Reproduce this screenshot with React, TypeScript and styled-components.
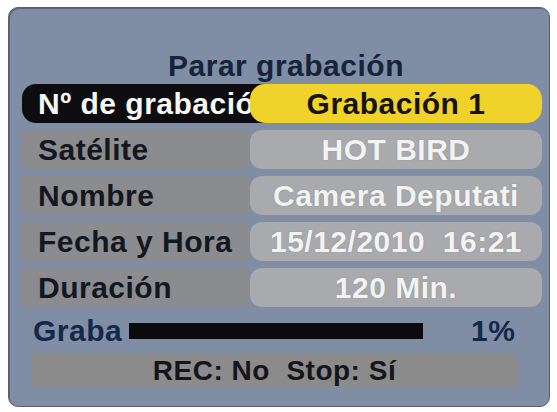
import React from "react"
import styled, { createGlobalStyle } from "styled-components"

const GlobalStyle = createGlobalStyle`
    html, body {
        margin: 0;
        padding: 0;
        background: #ffffff;
    }
    body {
        font-family: "Liberation Sans", Arial, sans-serif;
    }
`

const Screen = styled.div`
    width: 557px;
    height: 412px;
    padding: 7px 7px 5px 8px;
    box-sizing: border-box;
`

const Panel = styled.div`
    width: 542px;
    height: 400px;
    box-sizing: border-box;
    background: #7f8ea4;
    border: 1px solid #59606c;
    border-radius: 10px;
    box-shadow: inset 1px 1px 0 #5d6676;
    padding: 40px 7px 0 13px;
    display: flex;
    flex-direction: column;
    font-weight: bold;
    font-size: 30px;
    letter-spacing: 0.5px;
`

const Title = styled.div`
    height: 36px;
    line-height: 36px;
    text-align: center;
    color: #17233a;
    padding-left: 8px;
`

const Rows = styled.div`
    display: flex;
    flex-direction: column;
    gap: 7px;
`

const Row = styled.div`
    display: grid;
    grid-template-columns: 228px 16px 276px;
    height: 39px;
`

const Label = styled.div<{ $active?: boolean }>`
    grid-row: 1;
    grid-column: ${p => (p.$active ? "1 / 3" : "1 / 2")};
    background: ${p => (p.$active ? "#0d0d0f" : "#8b8c8f")};
    color: ${p => (p.$active ? "#f6f6f6" : "#14181e")};
    border-radius: ${p => (p.$active ? "14px 0 0 14px" : "0")};
    padding-left: 16px;
    line-height: 39px;
    white-space: nowrap;
    overflow: hidden;
`

const Value = styled.div<{ $active?: boolean }>`
    grid-row: 1;
    grid-column: 2 / 4;
    background: ${p => (p.$active ? "#efd32b" : "#a9aaad")};
    color: ${p => (p.$active ? "#15130a" : "#f3f3f3")};
    border-radius: ${p => (p.$active ? "15px" : "12px")};
    text-align: center;
    line-height: 39px;
    white-space: pre;
    overflow: hidden;
    text-shadow: ${p => (p.$active ? "none" : "0 0 1px rgba(90,90,90,0.6)")};
`

const Progress = styled.div`
    display: flex;
    align-items: center;
    height: 34px;
    margin-top: 7px;
    padding-left: 11px;
    color: #14284a;
`

const ProgressLabel = styled.span`
    width: 96px;
`

const Bar = styled.div`
    width: 294px;
    height: 16px;
    background: #0b0b0d;
`

const Percent = styled.span`
    margin-left: 48px;
`

const Status = styled.div`
    margin: 5px 25px 0 10px;
    height: 35px;
    line-height: 35px;
    background: #8c8b8b;
    color: #13161b;
    text-align: center;
    font-size: 28px;
    white-space: pre;
`

const fields = [
    { label: "Nº de grabación", value: "Grabación 1", active: true },
    { label: "Satélite", value: "HOT BIRD" },
    { label: "Nombre", value: "Camera Deputati" },
    { label: "Fecha y Hora", value: "15/12/2010  16:21" },
    { label: "Duración", value: "120 Min." },
]

const App: React.FC = () => {
    return (
        <Screen>
            <GlobalStyle />
            <Panel>
                <Title>Parar grabación</Title>
                <Rows>
                    {fields.map(f => (
                        <Row key={f.label}>
                            <Label $active={f.active}>{f.label}</Label>
                            <Value $active={f.active}>{f.value}</Value>
                        </Row>
                    ))}
                </Rows>
                <Progress>
                    <ProgressLabel>Graba</ProgressLabel>
                    <Bar />
                    <Percent>1%</Percent>
                </Progress>
                <Status>REC: No  Stop: Sí</Status>
            </Panel>
        </Screen>
    )
}

export default App
